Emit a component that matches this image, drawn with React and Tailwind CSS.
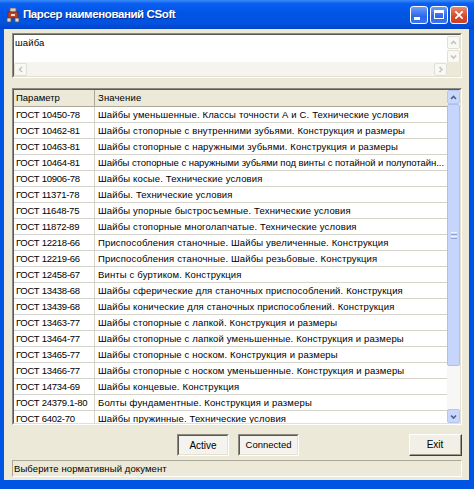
import React from "react";

const rows = [
  ["ГОСТ 10450-78", "Шайбы уменьшенные. Классы точности А и С. Технические условия"],
  ["ГОСТ 10462-81", "Шайбы стопорные с внутренними зубьями. Конструкция и размеры"],
  ["ГОСТ 10463-81", "Шайбы стопорные с наружными зубьями. Конструкция и размеры"],
  ["ГОСТ 10464-81", "Шайбы стопорные с наружными зубьями под винты с потайной и полупотайн..."],
  ["ГОСТ 10906-78", "Шайбы косые. Технические условия"],
  ["ГОСТ 11371-78", "Шайбы. Технические условия"],
  ["ГОСТ 11648-75", "Шайбы упорные быстросъемные. Технические условия"],
  ["ГОСТ 11872-89", "Шайбы стопорные многолапчатые. Технические условия"],
  ["ГОСТ 12218-66", "Приспособления станочные. Шайбы увеличенные. Конструкция"],
  ["ГОСТ 12219-66", "Приспособления станочные. Шайбы резьбовые. Конструкция"],
  ["ГОСТ 12458-67", "Винты с буртиком. Конструкция"],
  ["ГОСТ 13438-68", "Шайбы сферические для станочных приспособлений. Конструкция"],
  ["ГОСТ 13439-68", "Шайбы конические для станочных приспособлений. Конструкция"],
  ["ГОСТ 13463-77", "Шайбы стопорные с лапкой. Конструкция и размеры"],
  ["ГОСТ 13464-77", "Шайбы стопорные с лапкой уменьшенные. Конструкция и размеры"],
  ["ГОСТ 13465-77", "Шайбы стопорные с носком. Конструкция и размеры"],
  ["ГОСТ 13466-77", "Шайбы стопорные с носком уменьшенные. Конструкция и размеры"],
  ["ГОСТ 14734-69", "Шайбы концевые. Конструкция"],
  ["ГОСТ 24379.1-80", "Болты фундаментные. Конструкция и размеры"],
  ["ГОСТ 6402-70", "Шайбы пружинные. Технические условия"],
];

const paths = {
  up: "M1 5 L3.5 2.5 L6 5",
  down: "M1 2.5 L3.5 5 L6 2.5",
  left: "M5 1 L2.5 3.5 L5 6",
  right: "M2.5 1 L5 3.5 L2.5 6",
};

function Chevron({ dir, color }) {
  return (
    <svg width="7" height="7" viewBox="0 0 7 7">
      <path d={paths[dir]} fill="none" stroke={color} strokeWidth="1.6" />
    </svg>
  );
}

function ArrowBtn({ dir, blue }) {
  return (
    <div
      className={
        blue
          ? "w-[13px] h-[14px] shrink-0 rounded-[2px] border border-[#b4c7f2] bg-[#c8d7fb] flex items-center justify-center"
          : "w-[13px] h-[13px] shrink-0 rounded-[2px] border border-[#e2e0d6] bg-[#f8f8f4] flex items-center justify-center"
      }
    >
      <Chevron dir={dir} color={blue ? "#4d6185" : "#c5c3ba"} />
    </div>
  );
}

function Sunken({ className, children }) {
  return (
    <div className={"border-t border-l border-[#8c8a80] border-b border-r border-b-white border-r-white " + className}>
      <div className="w-full h-full border-t border-l border-[#5a5a55] border-b border-r border-b-[#e4e1d4] border-r-[#e4e1d4] overflow-hidden">
        {children}
      </div>
    </div>
  );
}

function TitleIcon() {
  return (
    <svg width="16" height="16" viewBox="0 0 16 16">
      <rect x="5" y="1" width="6" height="4" fill="#d8d4cc" stroke="#6b5a55" strokeWidth="0.8" />
      <rect x="3" y="5" width="10" height="6" fill="#c33b2a" stroke="#6b2a22" strokeWidth="0.8" />
      <rect x="2" y="11" width="4" height="4" fill="#e0dcd4" stroke="#555" strokeWidth="0.8" />
      <rect x="10" y="11" width="4" height="4" fill="#e0dcd4" stroke="#555" strokeWidth="0.8" />
      <rect x="6" y="7" width="4" height="2" fill="#f2e0c8" />
    </svg>
  );
}

export default function App() {
  return (
    <div
      className="w-[474px] h-[489px] flex flex-col overflow-hidden bg-[#0054e3]"
      style={{ fontFamily: '"Liberation Sans", Arial, sans-serif' }}
    >
      {/* Title bar */}
      <div className="h-[29px] shrink-0 flex items-center pl-[5px] pr-[6px] bg-[linear-gradient(180deg,#3b8cf8_0%,#0a5ef0_12%,#0055e5_45%,#0252e0_80%,#0244c8_100%)]">
        <TitleIcon />
        <span className="ml-[2px] text-white font-bold text-[11.5px] tracking-[-0.4px] [text-shadow:1px_1px_0_#0a2a8a]">
          Парсер наименований CSoft
        </span>
        <div className="ml-auto flex gap-[2px]">
          <div className="w-[18px] h-[18px] rounded-[3px] border border-white bg-[linear-gradient(180deg,#6f9cf8,#2c67ec_60%,#3d74ee)] relative">
            <div className="absolute left-[3px] bottom-[3px] w-[6px] h-[3px] bg-white" />
          </div>
          <div className="w-[18px] h-[18px] rounded-[3px] border border-white bg-[linear-gradient(180deg,#6f9cf8,#2c67ec_60%,#3d74ee)] flex items-center justify-center">
            <div className="w-[10px] h-[9px] border border-white border-t-[3px]" />
          </div>
          <div className="w-[18px] h-[18px] rounded-[3px] border border-white bg-[linear-gradient(180deg,#e88a6c,#d6472b_60%,#cf3f22)] flex items-center justify-center">
            <svg width="10" height="10" viewBox="0 0 11 11">
              <path d="M1.5 1.5 L9.5 9.5 M9.5 1.5 L1.5 9.5" stroke="white" strokeWidth="2" />
            </svg>
          </div>
        </div>
      </div>

      {/* Body */}
      <div className="flex-1 ml-[4px] mr-[5px] mb-[9px] bg-[#ece9d8] flex flex-col pl-[8px] pr-[7px] pt-[4px] text-[9.5px] text-black">
        {/* Memo */}
        <Sunken className="h-[45px] shrink-0">
          <div className="flex flex-col h-full bg-white">
            <div className="flex flex-1 min-h-0">
              <div className="flex-1 pl-[1px] pt-[2px] leading-[12px] tracking-[0.15px]">шайба</div>
              <div className="w-[13px] flex flex-col gap-[1px] pt-[1px] bg-[#fbfbf8]">
                <ArrowBtn dir="up" />
                <ArrowBtn dir="down" />
              </div>
            </div>
            <div className="h-[14px] flex">
              <div className="flex-1 flex justify-between bg-[#f5f4ee] pt-[1px]">
                <ArrowBtn dir="left" />
                <ArrowBtn dir="right" />
              </div>
              <div className="w-[13px] bg-[#ece9d8]" />
            </div>
          </div>
        </Sunken>

        {/* Grid */}
        <Sunken className="h-[337px] shrink-0 mt-[10px]">
          <div className="flex h-full bg-white">
            <div className="flex-1 min-w-0 flex flex-col">
              <div className="h-[17px] shrink-0 flex bg-[#ece9d8] border-b border-[#aca899]">
                <div className="w-[81px] shrink-0 pl-[2px] leading-[16px] border-r border-[#aca899]">Параметр</div>
                <div className="flex-1 pl-[3px] leading-[16px] tracking-[0.15px]">Значение</div>
              </div>
              {rows.map(([a, b]) => (
                <div key={a} className="h-[16px] shrink-0 flex border-b border-[#d6d3ca]">
                  <div className="w-[81px] shrink-0 pl-[2px] leading-[15px] tracking-[-0.25px] border-r border-[#d6d3ca] whitespace-nowrap overflow-hidden">
                    {a}
                  </div>
                  <div
                    className={
                      b.endsWith("...")
                        ? "flex-1 min-w-0 pl-[3px] leading-[15px] tracking-[-0.05px] whitespace-nowrap overflow-hidden"
                        : "flex-1 min-w-0 pl-[3px] pr-[1px] leading-[15px] tracking-[0.15px] whitespace-nowrap overflow-hidden text-ellipsis"
                    }
                  >
                    {b}
                  </div>
                </div>
              ))}
            </div>
            <div className="w-[13px] shrink-0 flex flex-col bg-[#f4f4f0]">
              <ArrowBtn dir="up" blue />
              <div className="h-[262px] shrink-0 rounded-[2px] border border-[#abc0f0] bg-[#c6d5fb] flex flex-col items-center justify-center gap-[1px]">
                <div className="w-[6px] h-[1px] bg-[#eef3ff]" />
                <div className="w-[6px] h-[1px] bg-[#8ca6e0]" />
                <div className="w-[6px] h-[1px] bg-[#eef3ff]" />
                <div className="w-[6px] h-[1px] bg-[#8ca6e0]" />
              </div>
              <div className="flex-1 bg-[#f7f7f5]" />
              <ArrowBtn dir="down" blue />
            </div>
          </div>
        </Sunken>

        {/* Buttons */}
        <div className="h-[22px] shrink-0 mt-[9px] flex items-stretch">
          <Sunken className="ml-[165px] w-[52px]">
            <div className="h-full bg-[#f4f3ee] flex items-center justify-center text-[10px]">Active</div>
          </Sunken>
          <Sunken className="ml-[9px] w-[61px]">
            <div className="h-full bg-[#f4f3ee] flex items-center justify-center text-[9.5px]">Connected</div>
          </Sunken>
          <div className="ml-auto w-[53px] border-t border-l border-white border-b border-r border-b-[#404040] border-r-[#404040]">
            <div className="h-full border-b border-r border-b-[#9d9a8c] border-r-[#9d9a8c] bg-[#f1efe6] flex items-center justify-center text-[10px]">
              Exit
            </div>
          </div>
        </div>

        {/* Status */}
        <div className="h-[17px] shrink-0 mt-[4px] border-t border-l border-[#aca899] border-b border-r border-b-white border-r-white pl-[1px] leading-[15px] whitespace-nowrap tracking-[0.1px]">
          Выберите нормативный документ
        </div>
      </div>
    </div>
  );
}
